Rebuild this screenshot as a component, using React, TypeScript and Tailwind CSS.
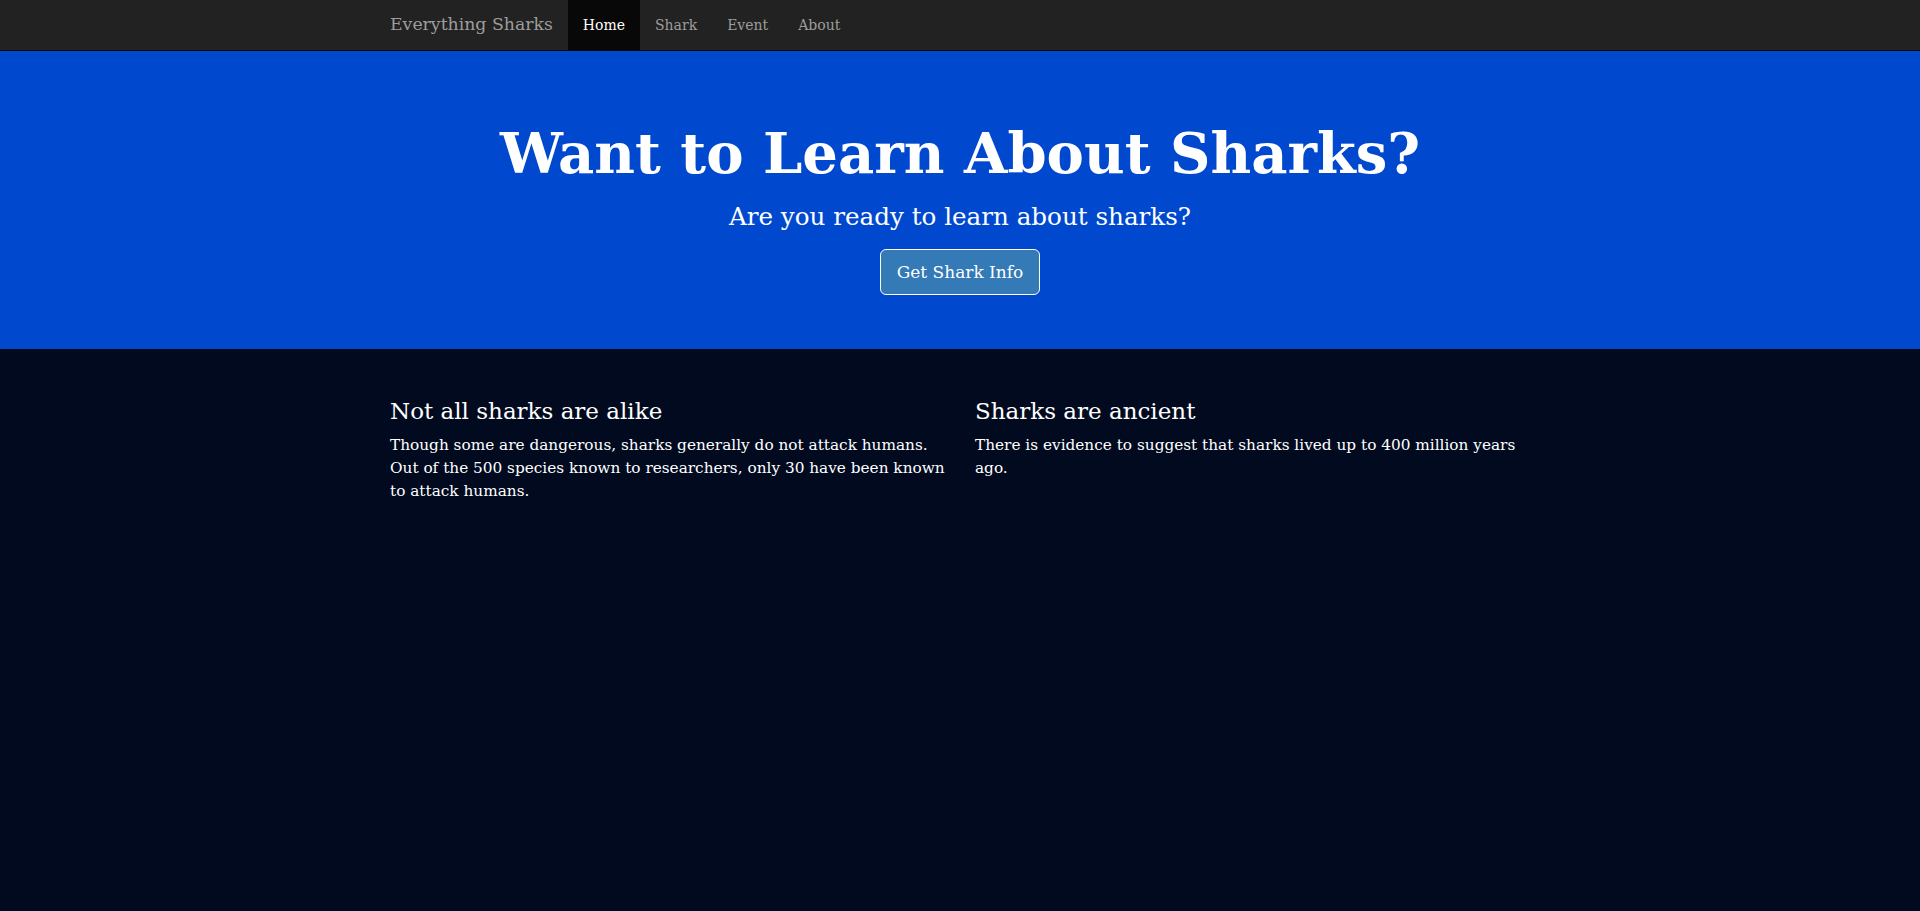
import React from 'react';

const serif = { fontFamily: '"DejaVu Serif", "Liberation Serif", serif' };

const NavBar = () => (
  <nav className="h-[51px] bg-[#222222] border-b border-[#080808]">
    <div className="w-[1140px] mx-auto flex items-stretch h-[50px]">
      <a className="text-[17.3px] text-[#9d9d9d] flex items-center pr-[15px]">Everything Sharks</a>
      <ul className="flex">
        {['Home', 'Shark', 'Event', 'About'].map((item, i) => (
          <li key={item}>
            <a
              className={`h-[50px] px-[15px] flex items-center text-[14px] ${
                i === 0 ? 'bg-[#080808] text-white' : 'text-[#9d9d9d]'
              }`}
            >
              {item}
            </a>
          </li>
        ))}
      </ul>
    </div>
  </nav>
);

const Hero = () => (
  <div className="bg-[#0049cf] text-white text-center pt-[48px] pb-[54px] flex flex-col items-center">
    <h1 className="text-[56px] leading-[1.1] font-bold mt-[24px]">Want to Learn About Sharks?</h1>
    <p className="text-[24.6px] leading-[30px] mt-[17px]">Are you ready to learn about sharks?</p>
    <button className="mt-[17px] bg-[#337ab7] border border-white rounded-[6px] px-[16px] py-[10px] text-[17px] leading-[24px] text-white">
      Get Shark Info
    </button>
  </div>
);

const facts = [
  {
    title: 'Not all sharks are alike',
    body: 'Though some are dangerous, sharks generally do not attack humans. Out of the 500 species known to researchers, only 30 have been known to attack humans.',
  },
  {
    title: 'Sharks are ancient',
    body: 'There is evidence to suggest that sharks lived up to 400 million years ago.',
  },
];

export default function App() {
  return (
    <div className="min-h-screen bg-[#010a1f] text-white" style={serif}>
      <NavBar />
      <Hero />
      <div className="w-[1170px] mx-auto pt-[30px]">
        <div className="grid grid-cols-2">
          {facts.map((f) => (
            <div key={f.title} className="px-[15px]">
              <h3 className="text-[23px] leading-[1.1] mt-[20px] mb-[10px]">{f.title}</h3>
              <p className="text-[15.3px] leading-[22.86px]">{f.body}</p>
            </div>
          ))}
        </div>
      </div>
    </div>
  );
}
